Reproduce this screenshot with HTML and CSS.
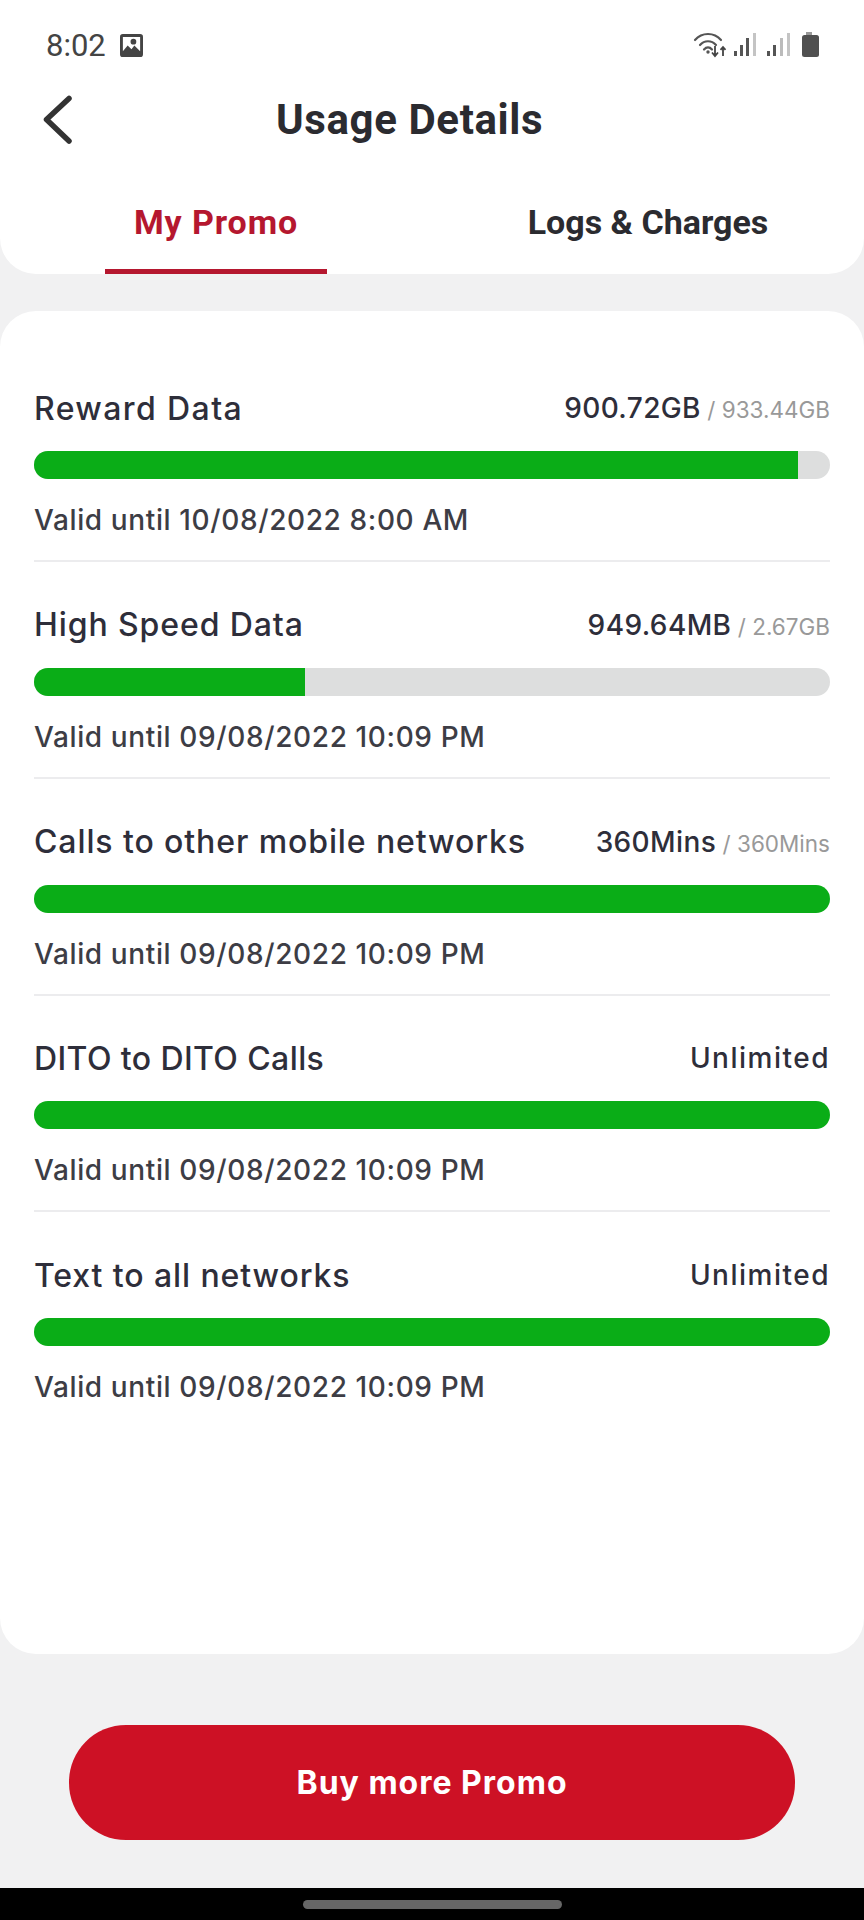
FILE: index.html
```html
<!DOCTYPE html>
<html lang="en">
<head>
<meta charset="utf-8">
<title>Usage Details</title>
<link rel="stylesheet" href="styles.css">
</head>
<body>
<div class="screen">
  <header class="header">
    <div class="status">
      <div class="status-left">
        <span class="time">8:02</span>
        <svg class="pic" viewBox="0 0 24 24" width="23" height="23"><path fill="#444" fill-rule="evenodd" d="M3 0h18a3 3 0 0 1 3 3v18a3 3 0 0 1-3 3H3a3 3 0 0 1-3-3V3a3 3 0 0 1 3-3zM3 3v15l5-6 4 4 3-4 6 6V3zM14 5a3 3 0 1 1 0 6 3 3 0 0 1 0-6z"/></svg>
      </div>
      <svg class="sys" viewBox="0 0 127 26" width="127" height="26">
        <g fill="none" stroke="#555" stroke-width="2.200" stroke-linecap="round">
          <path d="M2 8C9 0 21 0 28 8"/><path d="M7 13c4.500-5 11.500-5 16 0"/><path d="M11 17.500c2.500-2.800 5.500-2.800 8 0"/>
        </g>
        <circle cx="15" cy="20" r="1.700" fill="#555"/>
        <path d="M22 14v10m-3-3.500 3 3.500 3-3.500M30 24V15m-2.500 2.800 2.500-2.800 2.500 2.800" fill="none" stroke="#444" stroke-width="1.800"/>
        <g fill="#555"><rect x="41" y="19" width="3" height="5"/><rect x="47" y="13" width="3" height="11"/><rect x="53" y="6" width="3" height="18"/></g>
        <rect x="60" y="1" width="3" height="23" fill="#c4c4c4"/>
        <g fill="#555"><rect x="74" y="19" width="3" height="5"/><rect x="80" y="13" width="3" height="11"/></g>
        <rect x="87" y="6" width="3" height="18" fill="#bbb"/>
        <rect x="94" y="1" width="3" height="23" fill="#c4c4c4"/>
        <path fill="#999" d="M113 0h6v3h-6z"/>
        <rect x="109" y="3" width="17" height="22" rx="2.500" fill="#505050"/>
      </svg>
    </div>
    <div class="nav">
      <svg class="back" viewBox="0 0 34 50" width="34" height="50"><path d="M29 3.500 6.500 24.500 29 46" fill="none" stroke="#333" stroke-width="5.500" stroke-linecap="round" stroke-linejoin="round"/></svg>
      <h1 class="title">Usage Details</h1>
    </div>
    <nav class="tabs">
      <div class="tab tab-active"><span class="tab-label">My Promo</span></div>
      <div class="tab"><span class="tab-label">Logs &amp; Charges</span></div>
    </nav>
  </header>

  <main class="card">
    <section class="row">
      <div class="row-head"><span class="name name-wide">Reward Data</span><span class="amount">900.72GB<span class="total"> / 933.44GB</span></span></div>
      <div class="track"><div class="fill" style="width:96%"></div></div>
      <div class="valid">Valid until 10/08/2022 8:00 AM</div>
    </section>
    <section class="row">
      <div class="row-head"><span class="name">High Speed Data</span><span class="amount">949.64MB<span class="total"> / 2.67GB</span></span></div>
      <div class="track"><div class="fill" style="width:34%"></div></div>
      <div class="valid">Valid until 09/08/2022 10:09 PM</div>
    </section>
    <section class="row">
      <div class="row-head"><span class="name">Calls to other mobile networks</span><span class="amount">360Mins<span class="total"> / 360Mins</span></span></div>
      <div class="track"><div class="fill" style="width:100%"></div></div>
      <div class="valid">Valid until 09/08/2022 10:09 PM</div>
    </section>
    <section class="row">
      <div class="row-head"><span class="name name-caps">DITO to DITO Calls</span><span class="amount amount-word">Unlimited</span></div>
      <div class="track"><div class="fill" style="width:100%"></div></div>
      <div class="valid">Valid until 09/08/2022 10:09 PM</div>
    </section>
    <section class="row">
      <div class="row-head"><span class="name">Text to all networks</span><span class="amount amount-word">Unlimited</span></div>
      <div class="track"><div class="fill" style="width:100%"></div></div>
      <div class="valid">Valid until 09/08/2022 10:09 PM</div>
    </section>
  </main>

  <div class="action"><button class="buy">Buy more Promo</button></div>
  <div class="gesture"><div class="pill"></div></div>
</div>
</body>
</html>
```
FILE: styles.css
```css
* { box-sizing: border-box; }
html, body { margin: 0; padding: 0; }
body { background: #f1f1f2; font-family: Inter, "Liberation Sans", sans-serif; }
.screen { width: 864px; height: 1920px; display: flex; flex-direction: column; background: #f1f1f2; overflow: hidden; }

.header { height: 274px; background: #fff; border-radius: 0 0 36px 36px; }
.status { height: 90px; padding: 29px 44px 0 46px; display: flex; justify-content: space-between; align-items: flex-start; }
.status-left { display: flex; align-items: center; gap: 14px; height: 32px; }
.time { font-family: Roboto, sans-serif; font-size: 31px; color: #444; }
.sys { margin-top: 3px; }
.nav { height: 60px; padding-left: 40px; display: flex; align-items: center; }
.back { flex: none; }
.title { margin: 0 0 0 202px; padding-bottom: 2px; font-family: Roboto, sans-serif; font-size: 42px; font-weight: 700; color: #2b2b30; letter-spacing: 0.6px; }

.tabs { display: flex; height: 124px; }
.tab { flex: 1; display: flex; justify-content: center; }
.tab-label { padding-top: 52px; font-family: Roboto, sans-serif; font-size: 34px; font-weight: 700; color: #2b2b30; }
.tab-active .tab-label { width: 222px; text-align: center; color: #b5172f; border-bottom: 5px solid #b5172f; letter-spacing: 0.9px; }

.card { margin-top: 37px; height: 1343px; padding: 82px 34px 0; background: #fff; border-radius: 36px; }
.row { height: 216.750px; }
.row-head { height: 30px; display: flex; justify-content: space-between; align-items: center; }
.name { font-size: 32px; font-weight: 500; color: #2e2e3a; letter-spacing: 0.9px; }
.name-wide { letter-spacing: 1.400px; }
.name-caps { letter-spacing: 0.400px; }
.amount { font-size: 28px; font-weight: 500; color: #2e2e3a; letter-spacing: 0.4px; }
.amount-word { letter-spacing: 1.5px; }
.total { font-size: 22.500px; font-weight: 400; color: #999; letter-spacing: 0; }
.track { margin-top: 28px; height: 28px; border-radius: 14px; background: #dddede; overflow: hidden; }
.fill { height: 100%; background: #0aad17; }
.valid { margin-top: 27px; font-size: 28px; font-weight: 500; line-height: 28px; color: #3d3d45; letter-spacing: 0.62px; }
.row:not(:last-child) .valid { padding-bottom: 26px; border-bottom: 2px solid #ececee; }

.action { margin-top: 71px; display: flex; justify-content: center; }
.buy { width: 726px; height: 115px; border: 0; border-radius: 57px; background: #cd1125; color: #fff; font-family: Inter, sans-serif; font-size: 32px; font-weight: 700; letter-spacing: 1px; }
.gesture { margin-top: auto; height: 32px; background: #000; display: flex; justify-content: center; padding-top: 12px; }
.pill { width: 259px; height: 9px; border-radius: 5px; background: #666; }
```
